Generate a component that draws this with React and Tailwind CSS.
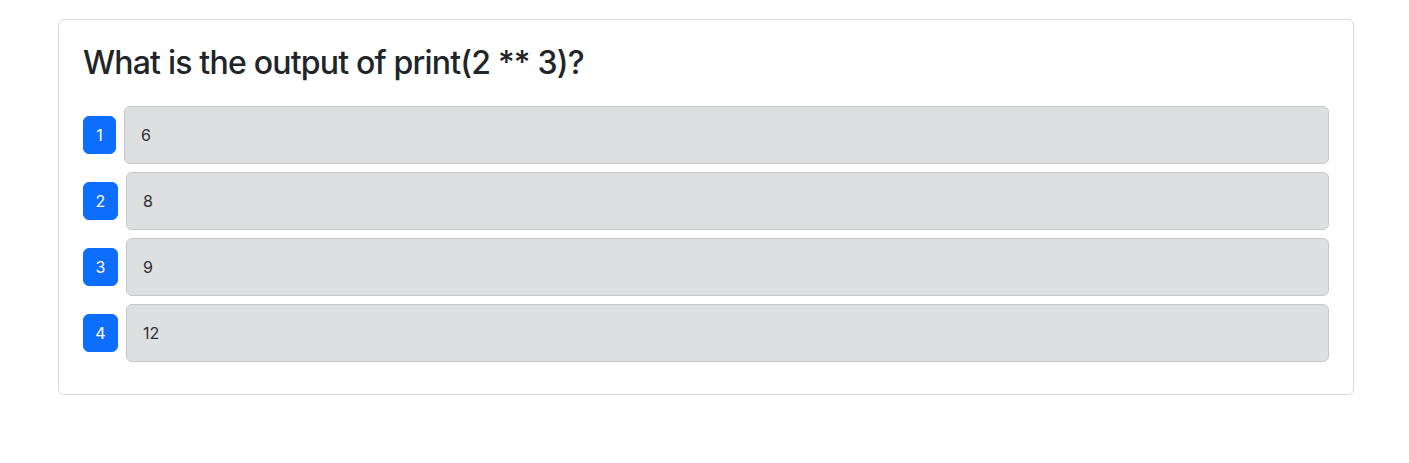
export default function App() {
  const options = ["6", "8", "9", "12"];
  return (
    <div className="min-h-[463px] bg-white pt-[19px]" style={{ fontFamily: "Inter, 'Liberation Sans', sans-serif" }}>
      <div className="ml-[58px] w-[1296px] rounded-md border border-[#d9d9d9] bg-white p-6">
        <h2 className="mb-6 text-[32px] font-medium leading-[1.2] tracking-[-0.8px] text-[#212529]">
          What is the output of print(2 ** 3)?
        </h2>
        <div>
          {options.map((opt, i) => (
            <div key={i} className="mb-2 flex items-center">
              <span
                className={
                  (i === 0 ? "w-[33px] " : "w-[35px] ") +
                  "rounded-md border border-[#0d6efd] bg-[#0d6efd] py-1.5 text-center text-base leading-6 text-white"
                }
              >
                {i + 1}
              </span>
              <div className="ml-2 flex-1 rounded-md border border-[#c4c6c9] bg-[#dedfe1] p-4 text-base leading-6 text-[#2b2f32]">
                {opt}
              </div>
            </div>
          ))}
        </div>
      </div>
    </div>
  );
}
